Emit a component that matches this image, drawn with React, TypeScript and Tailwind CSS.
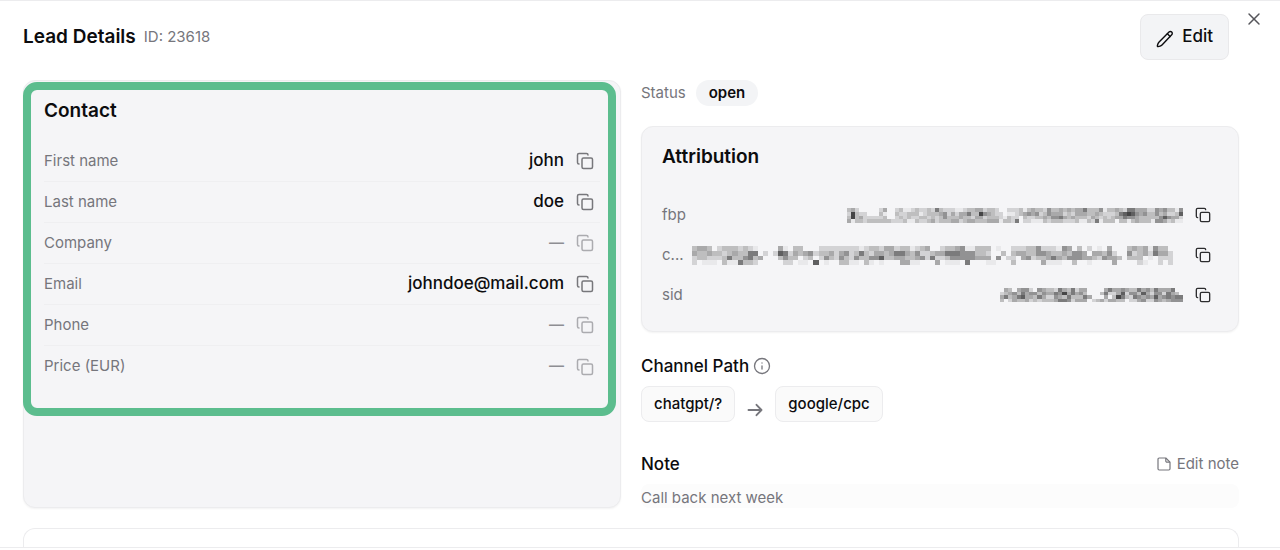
import type { ReactNode } from "react";
import { Copy, Info, X } from "lucide-react";

interface Field {
  label: string;
  value?: string;
}

const contactFields: Field[] = [
  { label: "First name", value: "john" },
  { label: "Last name", value: "doe" },
  { label: "Company" },
  { label: "Email", value: "johndoe@mail.com" },
  { label: "Phone" },
  { label: "Price (EUR)" },
];

// Redacted values: one digit per block, 0 is empty and 9 is the darkest
const attributionFields = [
  {
    label: "fbp",
    width: 336,
    height: 15,
    blocks: [
      "342000002400231123223263222112334423320022231343325334343446333513343266444225453315",
      "283220003100322333123334524244633854322011234545235444232444334322236787545335342237",
      "383422222300232322332323533343324423332132203223343556434333243232344655433333575442",
      "413323333332223113223423334423443334441332602211132333222311326133303313433315542311",
    ],
  },
  {
    label: "c...",
    width: 491,
    height: 19,
    blocks: [
      "3443023332321000041033000222222221233244233123400233451133301002223352221540302010400034341533000",
      "4334332343366020276243452334245236324434664352234466655533200303443355433435540443520052342644200",
      "2332223633563400035330230253253253355733443345262235555544405022045233464355544325443033301022200",
      "2011103116332000002201107010033110310100044110004011106000110003000004111003001000040000210020200",
    ],
  },
  {
    label: "sid",
    width: 183,
    height: 14,
    blocks: [
      "04304552054332643624400004644543364536444600",
      "23453645535446584645300036224725537425526430",
      "46346744364225436333640004038632654547456566",
      "30243342323334665244402342443302245225434555",
    ],
  },
];

const shades = [
  "transparent",
  "#e9e9eb",
  "#d3d3d5",
  "#bebebf",
  "#a9a9aa",
  "#929293",
  "#7b7b7c",
  "#5f5f60",
  "#454546",
  "#303031",
];

function Redacted({ blocks, width, height }: { blocks: string[]; width: number; height: number }) {
  return (
    <svg
      width={width}
      height={height}
      viewBox={`0 0 ${blocks[0].length} ${blocks.length}`}
      preserveAspectRatio="none"
      shapeRendering="crispEdges"
      className="min-w-0"
      aria-hidden="true"
    >
      {blocks.map((row, y) =>
        row.split("").map((level, x) => (
          <rect key={`${x}-${y}`} x={x} y={y} width="1" height="1" fill={shades[Number(level)]} />
        ))
      )}
    </svg>
  );
}

function PencilIcon() {
  return (
    <svg width="18" height="18" viewBox="0 0 18 18" fill="none" stroke="currentColor" strokeWidth="1.4" strokeLinecap="round" strokeLinejoin="round" aria-hidden="true">
      <path d="M13 2.100a1.900 1.900 0 0 1 2.700 0 1.900 1.900 0 0 1 0 2.700L6 14.900c-.8.8-1.700 1.300-2.800 1.500l-1.200.2c-.4.1-.7-.2-.6-.6l.2-1.200c.2-1.100.7-2 1.500-2.800Z" />
      <path d="m11.400 3.700 2.700 2.700" />
    </svg>
  );
}

function NoteIcon() {
  return (
    <svg width="14" height="14" viewBox="0 0 14 14" fill="none" stroke="currentColor" strokeWidth="1.2" strokeLinejoin="round" aria-hidden="true">
      <path d="M8.800 1H2.200A1.200 1.200 0 0 0 1 2.200v9.600A1.200 1.200 0 0 0 2.200 13h9.600a1.200 1.200 0 0 0 1.200-1.200V5.200Z" />
      <path d="M8.800 1v3a1.200 1.200 0 0 0 1.200 1.200h3" />
    </svg>
  );
}

function ArrowIcon() {
  return (
    <svg width="16" height="16" viewBox="0 0 16 16" fill="none" stroke="currentColor" strokeWidth="1.9" strokeLinecap="round" strokeLinejoin="round" aria-hidden="true">
      <path d="M1.500 8h13M9.500 2.800 14.500 8l-5 5.200" />
    </svg>
  );
}

function Chip({ children }: { children: ReactNode }) {
  return (
    <span className="rounded-lg border border-[#ececee] bg-[#fafafa] px-3 py-[7px] text-[15px] leading-5 font-medium">
      {children}
    </span>
  );
}

function ContactRow({ label, value }: Field) {
  return (
    <div className="flex h-[41px] items-center border-b border-[#efeff1] pr-1.5 last:border-b-0">
      <dt className="flex-1 text-[15px] text-[#76767c]">{label}</dt>
      <dd className="flex items-center gap-3">
        {value ? (
          <span className="text-[17px] font-medium">{value}</span>
        ) : (
          <span className="text-[15px] font-semibold text-[#8e8e93]">—</span>
        )}
        <button
          type="button"
          aria-label={`Copy ${label}`}
          disabled={!value}
          className="text-[#77777b] disabled:text-[#ababaf]"
        >
          <Copy size={18} strokeWidth={2} />
        </button>
      </dd>
    </div>
  );
}

export default function App() {
  return (
    <main className="relative overflow-hidden border-y border-[#ececee] bg-white pr-[41px] pl-[23px] font-['Inter',sans-serif] text-[#0c0c0e]">
      <header className="flex items-center justify-between pt-[13px] pr-2.5">
        <div className="flex items-center gap-2">
          <h1 className="text-[19px] font-semibold">Lead Details</h1>
          <span className="text-[15px] text-[#76767c]">ID: 23618</span>
        </div>
        <button
          type="button"
          className="flex h-[46px] items-center gap-2 rounded-lg border border-[#e9e9eb] bg-[#f3f4f6] px-[15px] text-[17px] font-medium"
        >
          <span className="pt-1">
            <PencilIcon />
          </span>
          Edit
        </button>
      </header>
      <button type="button" aria-label="Close" className="absolute top-2 right-4 text-[#55555a]">
        <X size={20} strokeWidth={1.75} />
      </button>

      <div className="mt-5 grid grid-cols-2 gap-5">
        <section className="relative rounded-xl border border-[#ececee] bg-[#f5f5f7] px-5 pt-4 shadow-xs">
          <h2 className="text-[19px] leading-7 font-semibold">Contact</h2>
          <dl className="mt-4">
            {contactFields.map((field) => (
              <ContactRow key={field.label} {...field} />
            ))}
          </dl>
          {/* Highlight ring around the contact fields */}
          <div className="pointer-events-none absolute top-px right-1 -left-px h-[334px] rounded-[14px] border-8 border-[#5cbd8e]" />
        </section>

        <div>
          <div className="flex items-center gap-2.5">
            <span className="text-[15px] text-[#76767c]">Status</span>
            <span className="rounded-full bg-[#f3f4f6] px-[13px] py-[3px] text-[15px] leading-5 font-semibold">
              open
            </span>
          </div>

          <section className="mt-5 rounded-xl border border-[#ececee] bg-[#f5f5f7] px-5 py-4 shadow-xs">
            <h2 className="text-[19px] leading-7 font-semibold">Attribution</h2>
            <dl className="mt-6">
              {attributionFields.map(({ label, ...value }) => (
                <div key={label} className="flex h-10 items-center justify-between gap-2 pr-[7px]">
                  <dt className="text-[15px] text-[#76767c]">{label}</dt>
                  <dd className="flex min-w-0 items-center gap-3">
                    <Redacted {...value} />
                    <button type="button" aria-label={`Copy ${label}`} className="text-[#2c2c2e]">
                      <Copy size={16} strokeWidth={2} />
                    </button>
                  </dd>
                </div>
              ))}
            </dl>
          </section>

          <section className="mt-[22px]">
            <div className="flex items-center gap-1">
              <h2 className="text-[17px] leading-6 font-medium">Channel Path</h2>
              <Info size={18} strokeWidth={1.75} className="text-[#76767c]" />
            </div>
            <div className="mt-2 flex items-center gap-3">
              <Chip>chatgpt/?</Chip>
              <span className="pt-3 text-[#76767c]">
                <ArrowIcon />
              </span>
              <Chip>google/cpc</Chip>
            </div>
          </section>

          <section className="mt-[30px]">
            <div className="flex items-center justify-between">
              <h2 className="text-[17px] leading-6 font-medium">Note</h2>
              <button type="button" className="flex items-center gap-1.5 text-[15px] text-[#76767c]">
                <NoteIcon />
                Edit note
              </button>
            </div>
            <p className="mt-2 rounded-lg bg-[#fcfcfc] pt-1 text-[15px] leading-5 text-[#76767c]">
              Call back next week
            </p>
          </section>
        </div>
      </div>

      <div className="mt-5 h-[19px] rounded-t-xl border border-b-0 border-[#ececee]" />
    </main>
  );
}
